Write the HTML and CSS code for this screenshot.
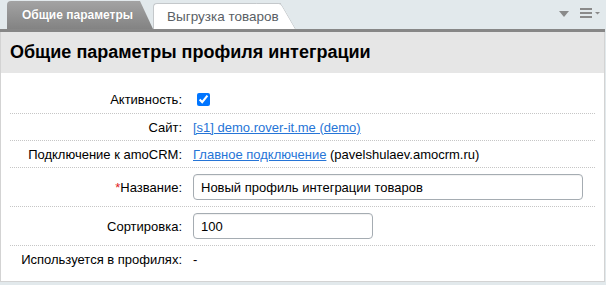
FILE: index.html
```html
<!DOCTYPE html>
<html lang="ru">
<head>
<meta charset="utf-8">
<link rel="stylesheet" href="styles.css">
</head>
<body>
<div class="page">
  <div class="tabs">
    <div class="tab tab-active">Общие параметры</div>
    <div class="tab tab-inactive">Выгрузка товаров</div>
    <div class="tab-tools">
      <svg class="tool-arrow" width="10" height="6" viewBox="0 0 10 6"><path d="M0 0H10L5 6Z" fill="#8a8a8a"/></svg>
      <svg class="tool-menu" width="21" height="10" viewBox="0 0 21 10"><rect x="0" y="0" width="12" height="2" fill="#8a8a8a"/><rect x="0" y="4" width="12" height="2" fill="#8a8a8a"/><rect x="0" y="8" width="12" height="2" fill="#8a8a8a"/><path d="M15 4H20L17.5 6.5Z" fill="#8a8a8a"/></svg>
    </div>
  </div>
  <div class="panel">
    <div class="panel-head">Общие параметры профиля интеграции</div>
    <div class="panel-body">
      <div class="row row-first">
        <div class="label">Активность:</div>
        <div class="value"><input type="checkbox" class="check" checked></div>
      </div>
      <div class="row">
        <div class="label">Сайт:</div>
        <div class="value"><a href="#" class="link">[s1] demo.rover-it.me (demo)</a></div>
      </div>
      <div class="row">
        <div class="label">Подключение к amoCRM:</div>
        <div class="value"><a href="#" class="link">Главное подключение</a> (pavelshulaev.amocrm.ru)</div>
      </div>
      <div class="row row-input">
        <div class="label"><span class="req">*</span>Название:</div>
        <div class="value"><input type="text" class="field field-wide" value="Новый профиль интеграции товаров"></div>
      </div>
      <div class="row row-input">
        <div class="label">Сортировка:</div>
        <div class="value"><input type="text" class="field field-short" value="100"></div>
      </div>
      <div class="row row-last">
        <div class="label">Используется в профилях:</div>
        <div class="value">-</div>
      </div>
    </div>
  </div>
</div>
</body>
</html>
```
FILE: styles.css
```css
html, body {
  margin: 0;
  padding: 0;
  background: #e2e9ec;
}
body {
  font-family: "Liberation Sans", Arial, sans-serif;
  font-size: 13px;
  color: #000;
}
.page {
  width: 605px;
}
.tabs {
  display: flex;
  align-items: flex-end;
  height: 29px;
  padding-left: 7px;
  border-bottom: 3px solid #878787;
}
.tab {
  position: relative;
  box-sizing: border-box;
  white-space: nowrap;
}
.tab-active {
  height: 28px;
  width: 133px;
  padding: 7px 0 0 15px;
  font-weight: bold;
  font-size: 12px;
  color: #fff;
  background: linear-gradient(#a3a3a3, #838383);
  border-top-left-radius: 4px;
  z-index: 2;
  text-shadow: 0 0 1px rgba(0,0,0,0.15);
}
.tab-active::after {
  content: "";
  position: absolute;
  top: 0;
  bottom: 0;
  right: -13px;
  width: 20px;
  background: linear-gradient(#a3a3a3, #838383);
  transform: skewX(24.9deg);
  transform-origin: bottom left;
  z-index: -1;
}
.tab-inactive {
  height: 26px;
  width: 128px;
  margin-left: 13px;
  padding: 5px 0 0 13px;
  font-size: 13.5px;
  color: #5a5f66;
  background: #fff;
  border-top: 1px solid #c4c8cb;
  border-left: 1px solid #c4c8cb;
  border-top-left-radius: 4px;
  z-index: 1;
}
.tab-inactive::after {
  content: "";
  position: absolute;
  top: -1px;
  bottom: 0;
  right: -15px;
  width: 24px;
  background: #fff;
  border-top: 1px solid #c4c8cb;
  border-right: 1px solid #c4c8cb;
  border-top-right-radius: 3px;
  transform: skewX(30deg);
  transform-origin: bottom left;
  z-index: -1;
}
.tab-tools {
  margin-left: auto;
  align-self: flex-start;
  display: flex;
  align-items: center;
  gap: 11px;
  padding: 8px 4px 0 0;
}
.tool-arrow {
  display: block;
  margin-top: 1px;
}
.tool-menu {
  display: block;
}
.panel {
  border: 1px solid #d3d3d3;
  border-top: 0;
  background: #fff;
}
.panel-head {
  height: 41px;
  box-sizing: border-box;
  padding: 10px 0 0 9px;
  background: #e6e6e6;
  font-weight: bold;
  font-size: 18px;
  color: #000;
}
.panel-body {
  padding: 13px 9px 9px 9px;
}
.row {
  display: flex;
  align-items: center;
  min-height: 26px;
  border-bottom: 1px dotted #c6c6c6;
}
.row-first {
  min-height: 27px;
}
.row-input {
  padding: 6px 0;
}
.row-last {
  border-bottom: 0;
}
.label {
  width: 172px;
  margin-right: 11px;
  text-align: right;
  flex-shrink: 0;
}
.value {
  display: flex;
  align-items: center;
  white-space: pre;
}
.req {
  color: #e02020;
}
.link {
  color: #2675d7;
  text-decoration: underline;
}
.check {
  margin: 3px 3px 3px 4px;
  width: 13px;
  height: 13px;
  accent-color: #0075ff;
}
.field {
  box-sizing: border-box;
  height: 26px;
  margin: 0;
  padding: 0 7px;
  border: 1px solid #a5acb2;
  border-radius: 4px;
  font-family: "Liberation Sans", Arial, sans-serif;
  font-size: 13px;
  color: #000;
  background: #fff;
  box-shadow: inset 0 1px 1px rgba(0,0,0,0.06);
}
.field-wide {
  width: 390px;
}
.field-short {
  width: 180px;
}
```
